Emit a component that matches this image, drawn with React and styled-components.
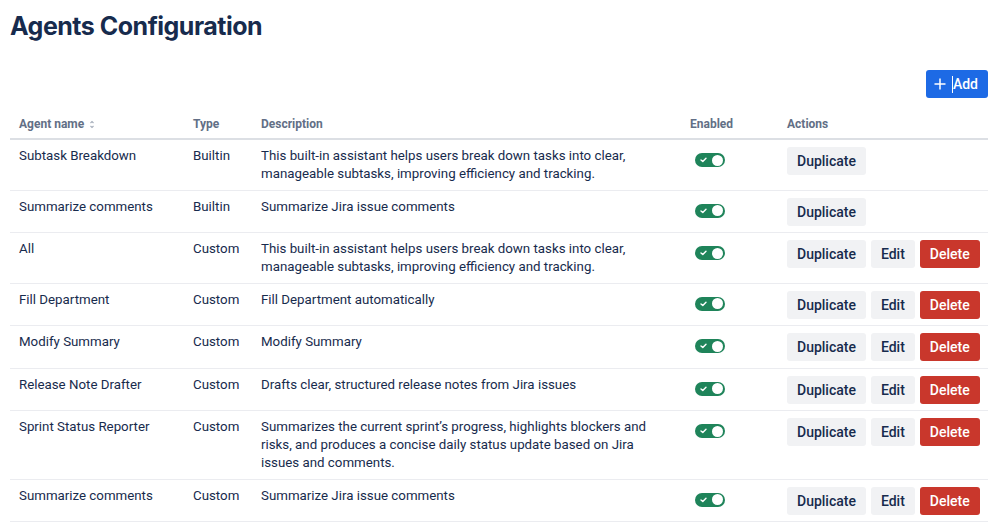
import React, { useState } from "react"
import styled, { createGlobalStyle } from 'styled-components'

const GlobalStyle = createGlobalStyle`
    body {
        margin: 0;
        background: #ffffff;
        font-family: Roboto, "Liberation Sans", sans-serif;
        color: #172B4D;
    }
`

const Page = styled.div`
    padding: 8px 10px 0 10px;
`

const Title = styled.h1`
    margin: 0;
    font-family: Inter, "Liberation Sans", sans-serif;
    font-size: 25px;
    line-height: 36px;
    font-weight: 700;
    letter-spacing: -0.02em;
    color: #172B4D;
`

const Toolbar = styled.div`
    display: flex;
    justify-content: flex-end;
    margin-top: 26px;
`

const AddButton = styled.button`
    display: flex;
    align-items: center;
    gap: 6px;
    height: 28px;
    padding: 0 10px 0 8px;
    border: none;
    border-radius: 3px;
    background: #1D6AE5;
    color: #ffffff;
    font-family: inherit;
    font-size: 14px;
    font-weight: 500;
    cursor: pointer;
`

// text cursor resting on the button
const Caret = styled.span`
    width: 1px;
    height: 17px;
    margin-right: -6px;
    background: #ffffff;
`

const Table = styled.table`
    width: 100%;
    margin-top: 12px;
    border-collapse: collapse;
    table-layout: fixed;
`

const Th = styled.th`
    text-align: left;
    padding: 6px 9px 6px 9px;
    font-size: 12px;
    line-height: 16px;
    font-weight: 700;
    color: #626F86;
    border-bottom: 2px solid #DCDFE4;
`

const Td = styled.td`
    vertical-align: top;
    padding: 7px ${p => (p.$wide ? '20px' : '9px')} 6.5px 9px;
    font-size: 13.3px;
    line-height: 18px;
    color: #172B4D;
`

const Row = styled.tr`
    border-bottom: 1px solid #EBECF0;
`

const SortMark = () => (
    <svg width="6" height="9" viewBox="0 0 6 9" style={{ marginLeft: 5, verticalAlign: 'middle' }}>
        <path d="M1.5 3 L3 1.5 L4.5 3 M1.5 6 L3 7.5 L4.5 6" fill="none" stroke="#A5ADBA" strokeWidth="1.1" />
    </svg>
)

const ToggleCell = styled.div`
    display: flex;
    padding: 6px 0 0 5px;
`

const ToggleTrack = styled.span`
    display: flex;
    align-items: center;
    justify-content: space-between;
    width: 30px;
    height: 14px;
    padding: 0 2px 0 5px;
    box-sizing: border-box;
    border-radius: 8px;
    background: ${p => (p.$on ? '#1F845A' : '#8590A2')};
    cursor: pointer;
`

const Knob = styled.span`
    width: 11px;
    height: 11px;
    border-radius: 50%;
    background: #ffffff;
`

const Toggle = () => {
    const [on, setOn] = useState(true)
    return (
        <ToggleCell>
            <ToggleTrack $on={on} onClick={() => setOn(!on)}>
                <svg width="7" height="6" viewBox="0 0 7 6">
                    <path d="M1 3 L2.8 4.6 L6 1.2" fill="none" stroke="#fff" strokeWidth="1.4" strokeLinecap="round" strokeLinejoin="round" />
                </svg>
                <Knob />
            </ToggleTrack>
        </ToggleCell>
    )
}

const Actions = styled.div`
    display: flex;
    gap: 5px;
`

const ActionButton = styled.button`
    height: 28px;
    padding: 0 10px;
    border: none;
    border-radius: 3px;
    background: ${p => (p.$danger ? '#C9372C' : '#F1F2F4')};
    color: ${p => (p.$danger ? '#ffffff' : '#172B4D')};
    font-family: inherit;
    font-size: 14px;
    font-weight: 500;
    cursor: pointer;
`

const agents = [
    { name: 'Subtask Breakdown', type: 'Builtin', description: 'This built-in assistant helps users break down tasks into clear, manageable subtasks, improving efficiency and tracking.' },
    { name: 'Summarize comments', type: 'Builtin', description: 'Summarize Jira issue comments' },
    { name: 'All', type: 'Custom', description: 'This built-in assistant helps users break down tasks into clear, manageable subtasks, improving efficiency and tracking.' },
    { name: 'Fill Department', type: 'Custom', description: 'Fill Department automatically' },
    { name: 'Modify Summary', type: 'Custom', description: 'Modify Summary' },
    { name: 'Release Note Drafter', type: 'Custom', description: 'Drafts clear, structured release notes from Jira issues' },
    { name: 'Sprint Status Reporter', type: 'Custom', description: 'Summarizes the current sprint’s progress, highlights blockers and risks, and produces a concise daily status update based on Jira issues and comments.' },
    { name: 'Summarize comments', type: 'Custom', description: 'Summarize Jira issue comments' },
]

const App = () => {
    return (
        <>
            <GlobalStyle />
            <Page>
                <Title>Agents Configuration</Title>
                <Toolbar>
                    <AddButton>
                        <svg width="12" height="12" viewBox="0 0 12 12">
                            <path d="M6 0.5 V11.5 M0.5 6 H11.5" stroke="#fff" strokeWidth="1.5" />
                        </svg>
                        <Caret />
                        Add
                    </AddButton>
                </Toolbar>
                <Table>
                    <colgroup>
                        <col style={{ width: 174 }} />
                        <col style={{ width: 68 }} />
                        <col style={{ width: 429 }} />
                        <col style={{ width: 97 }} />
                        <col />
                    </colgroup>
                    <thead>
                        <tr>
                            <Th>Agent name<SortMark /></Th>
                            <Th>Type</Th>
                            <Th>Description</Th>
                            <Th>Enabled</Th>
                            <Th>Actions</Th>
                        </tr>
                    </thead>
                    <tbody>
                        {agents.map((agent, i) => (
                            <Row key={i}>
                                <Td>{agent.name}</Td>
                                <Td>{agent.type}</Td>
                                <Td $wide>{agent.description}</Td>
                                <Td><Toggle /></Td>
                                <Td>
                                    <Actions>
                                        <ActionButton>Duplicate</ActionButton>
                                        {agent.type === 'Custom' && (
                                            <>
                                                <ActionButton>Edit</ActionButton>
                                                <ActionButton $danger>Delete</ActionButton>
                                            </>
                                        )}
                                    </Actions>
                                </Td>
                            </Row>
                        ))}
                    </tbody>
                </Table>
            </Page>
        </>
    )
}

export default App
